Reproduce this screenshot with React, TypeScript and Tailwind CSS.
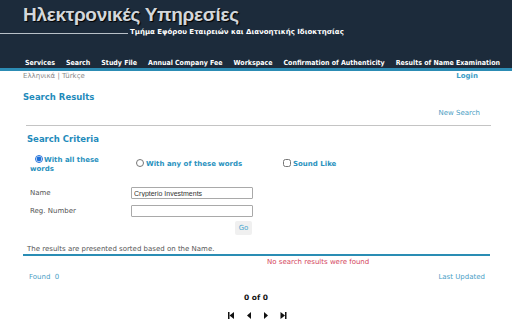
import { useState } from 'react';

const navItems = [
  'Services',
  'Search',
  'Study File',
  'Annual Company Fee',
  'Workspace',
  'Confirmation of Authenticity',
  'Results of Name Examination',
];

const Header = () => (
  <header className="bg-[#1c2b3b] h-[68px] flex flex-col">
    <h1 className="pl-[23px] pt-[3px] text-[19px] leading-[24px] tracking-[-0.3px] font-bold text-[#d3d7db] font-['Liberation_Sans',sans-serif] [text-shadow:1px_1px_1px_#000]">
      Ηλεκτρονικές Υπηρεσίες
    </h1>
    <div className="flex items-end h-[10px]">
      <div className="w-[128px] border-b border-[#b8c0c8] mb-[3px]" />
      <span className="ml-[2px] text-[7px] leading-[10px] font-bold text-white">
        Τμήμα Εφόρου Εταιρειών και Διανοητικής Ιδιοκτησίας
      </span>
    </div>
    <nav className="mt-auto pl-[25px] flex gap-[11px] h-[9px] items-center font-['DejaVu_Sans_Condensed','DejaVu_Sans',sans-serif] text-[7px] font-bold text-white">
      {navItems.map(item => (
        <a key={item} className="whitespace-nowrap cursor-pointer">
          {item}
        </a>
      ))}
    </nav>
  </header>
);

const First = () => (
  <svg width="7" height="7" viewBox="0 0 7 7">
    <rect x="0" y="0" width="1.5" height="7" fill="#111" />
    <polygon points="6,0 6,7 1.5,3.5" fill="#111" />
  </svg>
);
const Prev = () => (
  <svg width="6" height="7" viewBox="0 0 6 7">
    <polygon points="5,0 5,7 1,3.5" fill="#111" />
  </svg>
);
const Next = () => (
  <svg width="6" height="7" viewBox="0 0 6 7">
    <polygon points="1,0 1,7 5,3.5" fill="#111" />
  </svg>
);
const Last = () => (
  <svg width="7" height="7" viewBox="0 0 7 7">
    <polygon points="0.5,0 0.5,7 5,3.5" fill="#111" />
    <rect x="5" y="0" width="1.5" height="7" fill="#111" />
  </svg>
);

export default function App() {
  const [mode, setMode] = useState('all');
  const [sound, setSound] = useState(false);
  const [name, setName] = useState('Crypterio Investments');
  const [reg, setReg] = useState('');

  return (
    <div className="w-[512px] h-[328px] overflow-hidden bg-white font-['DejaVu_Sans',sans-serif]">
      <Header />
      <div className="h-[3px] bg-[#2c8cb4]" />

      <div className="flex justify-between h-[10px] items-center pl-[23px] pr-[34px]">
        <span className="text-[7px] text-[#8a8a8a]">Ελληνικά | Türkçe</span>
        <span className="text-[7px] font-bold text-[#3b9cc6]">Login</span>
      </div>

      <main className="px-[23px]">
        <h2 className="mt-[11px] text-[8.5px] leading-[10px] font-bold text-[#1f8bbb]">
          Search Results
        </h2>
        <div className="flex justify-end mt-[7px] pr-[9px]">
          <a className="text-[7px] leading-[8px] text-[#4a9ec3]">New Search</a>
        </div>
        <div className="ml-[3px] mr-[-2px] mt-[8px] border-t border-[#c4c4c4]" />

        <section className="pl-[4px]">
          <h3 className="mt-[8px] text-[8.5px] leading-[10px] font-bold text-[#1f8bbb]">
            Search Criteria
          </h3>

          <div className="flex mt-[11px] text-[7px] leading-[9px] font-bold text-[#2a92be]">
            <label className="w-[109px] pl-[3px] pr-[33px]">
              <input
                type="radio"
                checked={mode === 'all'}
                onChange={() => setMode('all')}
                className="w-[8px] h-[8px] ml-[5px] mr-[1px] align-[-1px] accent-[#1e6fd9]"
              />
              With all these words
            </label>
            <label className="w-[147px] pt-[4px]">
              <input
                type="radio"
                checked={mode === 'any'}
                onChange={() => setMode('any')}
                className="w-[8px] h-[8px] mr-[2px] align-[-1px]"
              />
              With any of these words
            </label>
            <label className="pt-[4px]">
              <input
                type="checkbox"
                checked={sound}
                onChange={() => setSound(!sound)}
                className="w-[8px] h-[8px] mr-[2px] align-[-1px]"
              />
              Sound Like
            </label>
          </div>

          <div className="mt-[13px] pl-[3px] flex flex-col gap-[6px] text-[7px] text-[#555]">
            <div className="flex items-center">
              <span className="w-[101px]">Name</span>
              <input
                value={name}
                onChange={e => setName(e.target.value)}
                className="w-[122px] h-[12px] border border-[#a9a9a9] rounded-[1px] px-[2px] text-[7px] text-[#333] font-['Liberation_Sans',sans-serif] outline-none"
              />
            </div>
            <div className="flex items-center">
              <span className="w-[101px]">Reg. Number</span>
              <input
                value={reg}
                onChange={e => setReg(e.target.value)}
                className="w-[122px] h-[12px] border border-[#a9a9a9] rounded-[1px] px-[2px] text-[7px] outline-none"
              />
            </div>
          </div>
          <div className="flex pl-[208px] mt-[4px]">
            <button className="w-[17px] h-[14px] bg-[#f0f0f0] rounded-[2px] text-[7px] text-[#4aa6cf]">
              Go
            </button>
          </div>
        </section>

        <p className="mt-[10px] pl-[4px] text-[7px] leading-[9px] text-[#555]">
          The results are presented sorted based on the Name.
        </p>
        <div className="h-[2px] bg-[#2a8db4] mr-[-1px]" />
        <p className="mt-[2px] pl-[244px] text-[7px] leading-[9px] text-[#d4465c]">
          No search results were found
        </p>
        <div className="flex justify-between mt-[6px] pl-[6px] pr-[4px] text-[7px] leading-[9px] text-[#4aa0c6]">
          <span>Found&nbsp;&nbsp;0</span>
          <span>Last Updated</span>
        </div>

        <p className="mt-[11px] text-center text-[7.5px] leading-[10px] font-bold text-[#111]">
          0 of 0
        </p>
        <div className="mt-[9px] flex justify-center gap-[11px] pl-[2px]">
          <First />
          <Prev />
          <Next />
          <Last />
        </div>
      </main>
    </div>
  );
}
